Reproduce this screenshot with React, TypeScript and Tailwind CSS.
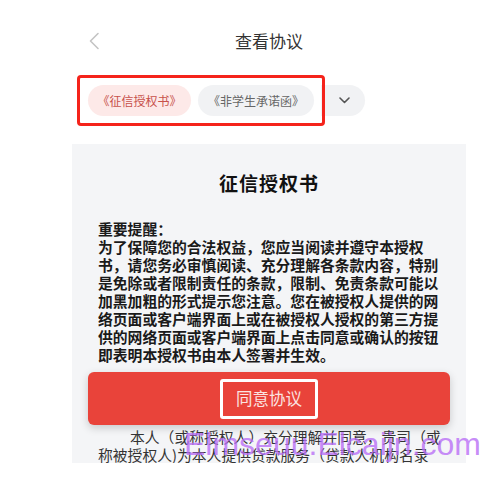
import React from "react";

const bodyLines = [
  "为了保障您的合法权益，您应当阅读并遵守本授权",
  "书，请您务必审慎阅读、充分理解各条款内容，特别",
  "是免除或者限制责任的条款，限制、免责条款可能以",
  "加黑加粗的形式提示您注意。您在被授权人提供的网",
  "络页面或客户端界面上或在被授权人授权的第三方提",
  "供的网络页面或客户端界面上点击同意或确认的按钮",
  "即表明本授权书由本人签署并生效。",
];

export default function App() {
  return (
    <div className="relative w-[501px] h-[478px] bg-white overflow-hidden font-['Noto_Sans_CJK_SC','Noto_Sans',sans-serif]">
      <div className="ml-[72px] w-[394px]">
        {/* header */}
        <div className="mt-[28px] h-[26px] flex items-center px-[16px]">
          <svg width="12" height="18" viewBox="0 0 12 18" fill="none">
            <polyline points="10,1.5 2.5,9 10,16.5" stroke="#c4c4c4" strokeWidth="1.6" strokeLinecap="round" strokeLinejoin="round" />
          </svg>
          <div className="flex-1 text-center text-[17px] leading-[26px] text-[#333] -ml-[12px]">查看协议</div>
        </div>

        {/* chips */}
        <div className="mt-[21px] ml-[5px] flex items-center">
          <div className="relative z-10 flex gap-[7px] border-[3px] border-[#f5231b] rounded-[4px] px-[8px] py-[7px]">
            <div className="w-[103px] h-[31px] rounded-full bg-[#fde9e8] flex items-center justify-center text-[12px] text-[#c8514b]">《征信授权书》</div>
            <div className="w-[116px] h-[31px] rounded-full bg-[#f1f2f4] flex items-center justify-center text-[12px] text-[#666]">《非学生承诺函》</div>
          </div>
          <div className="-ml-[4px] w-[44px] h-[31px] rounded-r-full bg-[#f1f2f4] flex items-center justify-center pl-[2px]">
            <svg width="11" height="7" viewBox="0 0 11 7" fill="none">
              <polyline points="1,1 5.5,5.5 10,1" stroke="#555" strokeWidth="1.6" strokeLinecap="round" strokeLinejoin="round" />
            </svg>
          </div>
        </div>

        {/* panel */}
        <div className="mt-[18px] h-[319px] bg-[#f4f5f7] overflow-hidden">
          <div className="pt-[27px] text-center text-[19px] leading-[24px] font-bold text-[#111] tracking-[1px]">征信授权书</div>
          <div className="mt-[25px] pl-[26px] text-[14.8px] leading-[18px] font-bold text-[#1a1a1a]">
            <div>重要提醒：</div>
            {bodyLines.map((l) => (
              <div key={l} className="whitespace-nowrap">{l}</div>
            ))}
          </div>
          <div className="mt-[8px] mx-[16px] h-[53px] rounded-[6px] bg-[#e9433a] shadow-[0_3px_8px_rgba(0,0,0,0.18)] flex items-center justify-center">
            <div className="w-[98px] h-[40px] border-[3px] border-white rounded-[3px] flex items-center justify-center text-[16.5px] text-[#fbe4e1]">同意协议</div>
          </div>
          <div className="mt-[3px] text-[14.8px] leading-[18px] text-[#333]">
            <div className="pl-[58px] whitespace-nowrap">本人（或称授权人）充分理解并同意，贵司（或</div>
            <div className="pl-[26px] whitespace-nowrap">称被授权人)为本人提供贷款服务（贷款人机构名录</div>
          </div>
        </div>
      </div>

      {/* watermark */}
      <div className="absolute left-[184px] top-[427px] text-[32px] leading-[34px] text-[#b86ef6]/80 font-['Liberation_Sans',sans-serif] whitespace-nowrap pointer-events-none">
        Elmseuu.Elcaijn.com
      </div>
    </div>
  );
}
